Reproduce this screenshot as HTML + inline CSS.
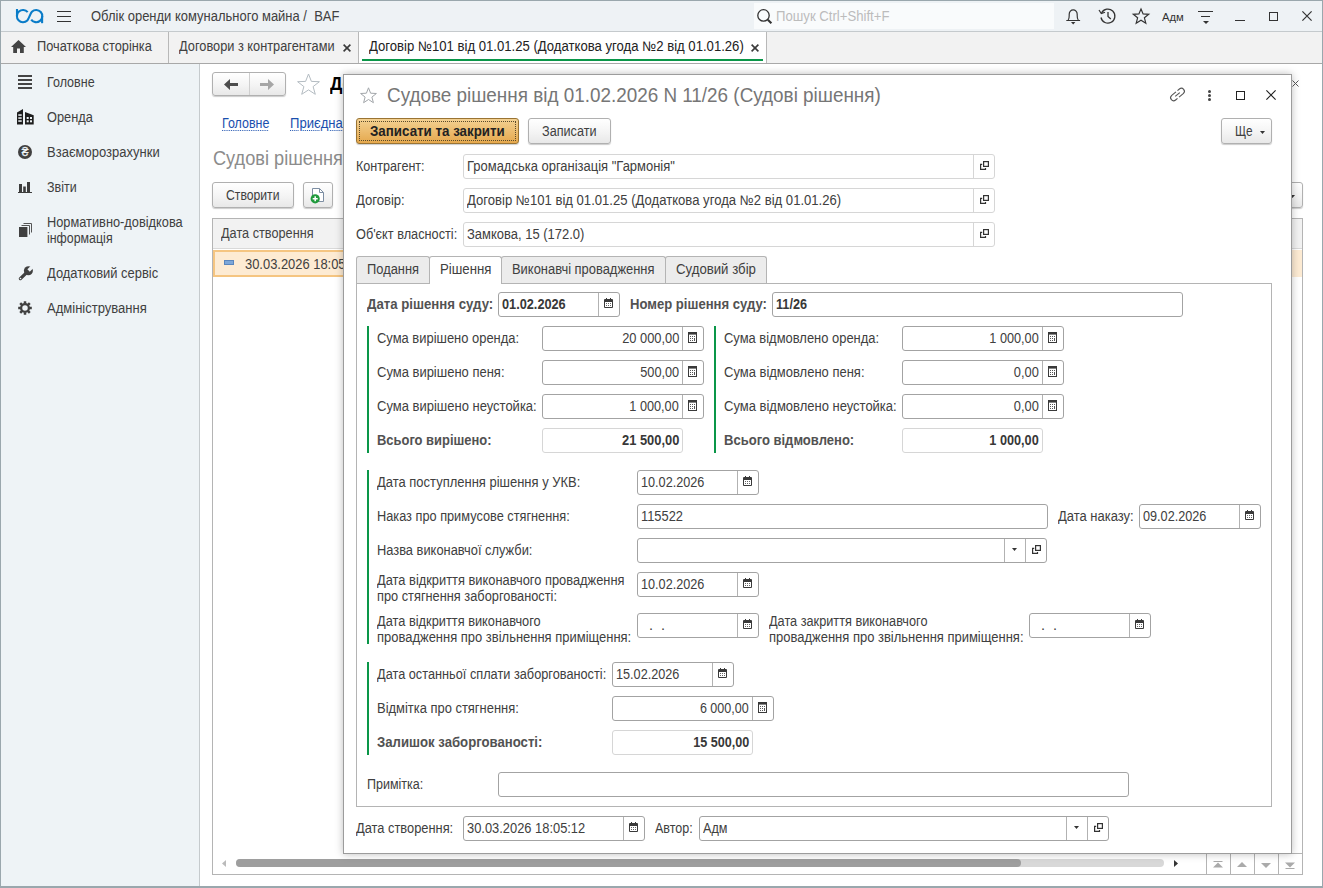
<!DOCTYPE html><html lang="uk"><head><meta charset="utf-8"><title>Судове рішення</title><style>
*{box-sizing:border-box;margin:0;padding:0}
html,body{width:1323px;height:888px;overflow:hidden;background:#fff}
body{font-family:"Liberation Sans",sans-serif;font-size:13.8px;color:#404040;position:relative}
.a{position:absolute}
.t{position:absolute;white-space:pre;line-height:16px;height:16px}
.b{font-weight:bold;color:#525252}
.inp{position:absolute;border:1px solid #a3a3a3;border-radius:3px;background:#fff;height:25px}
.inp.ro{border-color:#d6d6d6}
.inp .v{position:absolute;top:4px;line-height:16px;white-space:pre}
.inp .sep{position:absolute;top:0;bottom:0;width:1px;background:#b2b2b2}
.inp.ro .sep{background:#d6d6d6}
.btn{position:absolute;border:1px solid #b0b0b0;border-radius:3px;background:linear-gradient(#fff,#f4f4f4 55%,#e8e8e8);height:26px;box-shadow:0 1px 1px rgba(0,0,0,.2);white-space:pre}
.gbar{position:absolute;width:2px;background:#0a9648}
svg{position:absolute;overflow:visible}
</style></head><body>
<div class="a" style="left:0px;top:0px;width:1323px;height:32px;background:#eef2f5;border-bottom:1px solid #c5cacd"></div>
<svg style="left:16px;top:9px" width="28" height="15" viewBox="0 0 28 15" fill="none" stroke="#0a7cc8" stroke-width="2.1"><path d="M11.67 3.18A6.1 6.1 0 1 0 11.31 11.41C12.72 10 14.48 4.2 15.89 2.79A6.1 6.1 0 1 1 15.2 10.6"/><path d="M1 0V7.1"/><path d="M26.1 7.1V14.2"/></svg>
<div class="a" style="left:57px;top:11px;width:14px;height:1px;background:#333"></div>
<div class="a" style="left:57px;top:16px;width:14px;height:1px;background:#333"></div>
<div class="a" style="left:57px;top:21px;width:14px;height:1px;background:#333"></div>
<div class="t " style="left:91px;top:9px;transform:scaleX(0.9409);transform-origin:0 50%;">Облік оренди комунального майна /  BAF</div>
<div class="a" style="left:754px;top:3px;width:300px;height:26px;background:#f9fbfc"></div>
<svg style="left:757px;top:9px" width="16" height="16" viewBox="0 0 16 16" fill="none" stroke="#333" stroke-width="1.3"><circle cx="6.5" cy="6.4" r="5.7"/><path d="M10.8 10.7L14.4 14.3" stroke-width="2.1"/></svg>
<div class="t " style="left:776px;top:9px;transform:scaleX(0.9534);transform-origin:0 50%;color:#bcbcbc">Пошук Ctrl+Shift+F</div>
<svg style="left:1066px;top:9px" width="15" height="16" viewBox="0 0 15 16" fill="none" stroke="#333" stroke-width="1.2"><path d="M0.3 11.5H14.1M2 11.5C3.6 9.5 3.2 7 3.2 5.2A4 4.4 0 0 1 11.2 5.2C11.2 7 10.8 9.5 12.4 11.5"/><path d="M5 13.1H9.4L7.2 15.5Z" fill="#333" stroke="none"/></svg>
<svg style="left:1098px;top:8px" width="18" height="16" viewBox="0 0 18 16" fill="none" stroke="#333" stroke-width="1.3"><path d="M3.6 5A7 7 0 1 1 3 9.5"/><path d="M1 2L3.3 5.6L7 4.2" stroke-width="1.2"/><path d="M10 4V8.5L12.8 11"/></svg>
<svg style="left:1132px;top:8px" width="18" height="16" viewBox="0 0 18 16" fill="none" stroke="#333" stroke-width="1.2" stroke-linejoin="miter"><path d="M9 1L11.1 5.9L16.7 6.3L12.4 9.8L13.8 15.2L9 12.3L4.2 15.2L5.6 9.8L1.3 6.3L6.9 5.9Z"/></svg>
<div class="t " style="left:1162px;top:9px;font-size:11px;transform:scaleX(1.0221);transform-origin:0 50%;color:#333">Адм</div>
<div class="a" style="left:1198px;top:11px;width:15px;height:1px;background:#333"></div>
<div class="a" style="left:1201px;top:16px;width:9px;height:1px;background:#333"></div>
<svg style="left:1202.5px;top:20.5px" width="6" height="3" viewBox="0 0 6 3"><path d="M0 0H6L3 3Z" fill="#333"/></svg>
<div class="a" style="left:1235px;top:20px;width:10px;height:1px;background:#333"></div>
<div class="a" style="left:1269px;top:12px;width:9px;height:9px;border:1px solid #333"></div>
<svg style="left:1302px;top:11px" width="10" height="10" viewBox="0 0 10 10" stroke="#333" stroke-width="1.2"><path d="M0.4 0.4L9.6 9.6M9.6 0.4L0.4 9.6"/></svg>
<div class="a" style="left:0px;top:32px;width:1323px;height:32px;background:#f2f2f2;border-bottom:1px solid #a8a8a8"></div>
<svg style="left:11px;top:40px" width="15" height="13" viewBox="0 0 15 13"><path d="M7.5 0L15 7H12.8V13H9V8.5H6V13H2.2V7H0Z" fill="#444"/></svg>
<div class="t " style="left:37px;top:39px;transform:scaleX(0.9271);transform-origin:0 50%;">Початкова сторінка</div>
<div class="a" style="left:168px;top:32px;width:1px;height:31px;background:#b8b8b8"></div>
<div class="t " style="left:179px;top:39px;transform:scaleX(0.9262);transform-origin:0 50%;">Договори з контрагентами</div>
<svg style="left:342.5px;top:43.5px" width="8" height="8" viewBox="0 0 8 8" stroke="#3a3a3a" stroke-width="1.6"><path d="M0.6 0.6L7.4 7.4M7.4 0.6L0.6 7.4"/></svg>
<div class="a" style="left:358px;top:32px;width:1px;height:31px;background:#b8b8b8"></div>
<div class="a" style="left:359px;top:32px;width:407px;height:31px;background:#fff"></div>
<div class="t " style="left:369px;top:39px;transform:scaleX(0.9509);transform-origin:0 50%;color:#222">Договір №101 від 01.01.25 (Додаткова угода №2 від 01.01.26)</div>
<svg style="left:750.5px;top:43.5px" width="8" height="8" viewBox="0 0 8 8" stroke="#3a3a3a" stroke-width="1.6"><path d="M0.6 0.6L7.4 7.4M7.4 0.6L0.6 7.4"/></svg>
<div class="a" style="left:362px;top:59px;width:401px;height:2px;background:#0a9648"></div>
<div class="a" style="left:766px;top:32px;width:1px;height:31px;background:#b8b8b8"></div>
<div class="a" style="left:0px;top:64px;width:200px;height:824px;background:#eef3f6;border-right:1px solid #c5cacd"></div>
<div class="t " style="left:47px;top:75px;transform:scaleX(0.9080);transform-origin:0 50%;">Головне</div>
<div class="t " style="left:47px;top:110px;transform:scaleX(0.9267);transform-origin:0 50%;">Оренда</div>
<div class="t " style="left:47px;top:145px;transform:scaleX(0.9436);transform-origin:0 50%;">Взаєморозрахунки</div>
<div class="t " style="left:47px;top:180px;transform:scaleX(0.9034);transform-origin:0 50%;">Звіти</div>
<div class="t " style="left:47px;top:215px;transform:scaleX(0.9276);transform-origin:0 50%;">Нормативно-довідкова</div>
<div class="t " style="left:47px;top:231px;transform:scaleX(0.8988);transform-origin:0 50%;">інформація</div>
<div class="t " style="left:47px;top:266px;transform:scaleX(0.9377);transform-origin:0 50%;">Додатковий сервіс</div>
<div class="t " style="left:47px;top:301px;transform:scaleX(0.9443);transform-origin:0 50%;">Адміністрування</div>
<div class="a" style="left:18px;top:75px;width:14px;height:2px;background:#444"></div>
<div class="a" style="left:18px;top:79px;width:14px;height:2px;background:#444"></div>
<div class="a" style="left:18px;top:83px;width:14px;height:2px;background:#444"></div>
<div class="a" style="left:18px;top:87px;width:14px;height:2px;background:#444"></div>
<svg style="left:17px;top:109px" width="17" height="16" viewBox="0 0 17 16" fill="#1e1e1e"><path d="M0 3.5L6 0V15.5H0Z"/><path d="M8 3L16.7 6.3V15.5H8Z"/><g fill="#eef3f6"><rect x="1.3" y="5.3" width="3.4" height="1.5"/><rect x="1.3" y="8.3" width="3.4" height="1.5"/><rect x="1.3" y="11.3" width="3.4" height="1.5"/><rect x="9.7" y="8" width="2" height="2"/><rect x="13" y="8" width="2" height="2"/><rect x="9.7" y="11.3" width="2" height="2"/><rect x="13" y="11.3" width="2" height="2"/></g></svg>
<svg style="left:18px;top:145px" width="14" height="14" viewBox="0 0 14 14"><circle cx="7" cy="7" r="7" fill="#404040"/><text x="7" y="11.2" font-size="12" text-anchor="middle" fill="#eef3f6" stroke="#eef3f6" stroke-width=".3" font-family="Liberation Sans, sans-serif">₴</text></svg>
<svg style="left:18px;top:182px" width="14" height="11" viewBox="0 0 14 11" fill="#3c3c3c"><rect x="0" y="10" width="14" height="1"/><rect x="1" y="2" width="3" height="8"/><rect x="5.2" y="4.5" width="2.6" height="5.5"/><rect x="9" y="0" width="3" height="10"/></svg>
<svg style="left:19px;top:223px" width="13" height="14" viewBox="0 0 13 14"><path d="M4.5 0.5H12.5V9.5" fill="none" stroke="#555"/><path d="M2.5 2.5H10.5V11.5" fill="none" stroke="#555"/><rect x="0" y="4" width="8.4" height="10" fill="#404040"/></svg>
<svg style="left:17.5px;top:265.5px" width="15" height="15" viewBox="0 0 15 15"><path d="M2.4 12.6L8.6 6.6" stroke="#404040" stroke-width="3.3" stroke-linecap="round"/><circle cx="10.4" cy="4.7" r="4.5" fill="#404040"/><path d="M10.6 4.5L15.5 -0.4" stroke="#eef3f6" stroke-width="3.4"/><circle cx="2.5" cy="12.5" r="0.8" fill="#eef3f6"/></svg>
<svg style="left:18px;top:301px" width="14" height="14" viewBox="0 0 14 14"><circle cx="7" cy="7" r="3.9" fill="none" stroke="#404040" stroke-width="2.3"/><g stroke="#404040" stroke-width="2.5"><path d="M7 0.2V2.6M7 11.4V13.8M0.2 7H2.6M11.4 7H13.8M2.2 2.2L3.9 3.9M10.1 10.1L11.8 11.8M2.2 11.8L3.9 10.1M10.1 3.9L11.8 2.2"/></g></svg>
<div class="btn" style="left:212px;top:72px;width:74px;height:24px"></div>
<div class="a" style="left:249px;top:73px;width:1px;height:22px;background:#cfcfcf"></div>
<svg style="left:224px;top:79px" width="14" height="11" viewBox="0 0 14 11"><path d="M0 5.5L6 0V4H14V7H6V11Z" fill="#4d4d4d"/></svg>
<svg style="left:260px;top:79px" width="14" height="11" viewBox="0 0 14 11"><path d="M14 5.5L8 0V4H0V7H8V11Z" fill="#a6a6a6"/></svg>
<svg style="left:297px;top:73px" width="23" height="22" viewBox="0 0 23 22" fill="none" stroke="#b4bcc2" stroke-width="1"><path d="M11.5 1L14.4 8.4L22.4 8.7L16.1 13.6L18.3 21.3L11.5 16.9L4.7 21.3L6.9 13.6L0.6 8.7L8.6 8.4Z"/></svg>
<div class="t b" style="left:330px;top:72px;font-size:18.7px;transform:scaleX(.93);transform-origin:0 50%;line-height:24px;height:24px;color:#000">Договір №101 від 01.01.25 (Додаткова угода №2 від 01.01.26)</div>
<div class="t " style="left:222px;top:116px;transform:scaleX(0.9042);transform-origin:0 50%;color:#1a4fae;text-decoration:underline dotted #1a4fae 1px;text-underline-offset:2px">Головне</div>
<div class="t " style="left:290px;top:116px;transform:scaleX(0.9495);transform-origin:0 50%;color:#1a4fae;text-decoration:underline dotted #1a4fae 1px;text-underline-offset:2px">Приєднані файли</div>
<div class="t" style="left:212.5px;top:146px;font-size:19.6px;line-height:24px;height:24px;color:#8c8c8c;transform:scaleX(0.9275);transform-origin:0 50%;">Судові рішення</div>
<div class="btn" style="left:212px;top:182px;width:82px"></div>
<div class="t " style="left:226px;top:188px;transform:scaleX(0.8836);transform-origin:0 50%;">Створити</div>
<div class="btn" style="left:303px;top:182px;width:30px"></div>
<svg style="left:310px;top:187px" width="15" height="17" viewBox="0 0 15 17"><path d="M2.5 1.5H9.5L13.5 5.5V14.5H2.5Z" fill="#fff" stroke="#7d8ea3"/><path d="M9.5 1.5V5.5H13.5" fill="none" stroke="#7d8ea3"/><circle cx="5.2" cy="11.8" r="4.6" fill="#1f9a3c"/><path d="M2.7 11.8H7.7M5.2 9.3V14.3" stroke="#fff" stroke-width="1.5"/></svg>
<div class="btn" style="left:1270px;top:182px;width:33px"></div>
<svg style="left:1290px;top:195px" width="5" height="3" viewBox="0 0 5 3"><path d="M0 0H5L2.5 3Z" fill="#333"/></svg>
<div class="a" style="left:212px;top:218px;width:1091px;height:657px;border:1px solid #b4b4b4;background:#fff"></div>
<div class="a" style="left:213px;top:219px;width:1089px;height:30px;background:#f2f2f2;border-bottom:1px solid #d9d9d9"></div>
<div class="t " style="left:221px;top:226px;transform:scaleX(0.9212);transform-origin:0 50%;color:#444">Дата створення</div>
<div class="a" style="left:213px;top:250px;width:1089px;height:27px;background:#fdebd3"></div>
<div class="a" style="left:213px;top:250px;width:500px;height:27px;border:2px solid #f5c581;border-right:none"></div>
<div class="a" style="left:224px;top:260px;width:10px;height:5px;background:#7da7d9;border:1px solid #5a86bd"></div>
<div class="t " style="left:245px;top:257px;transform:scaleX(0.9361);transform-origin:0 50%;">30.03.2026 18:05:12</div>
<div class="a" style="left:1206px;top:853px;width:96px;height:1px;background:#b4b4b4"></div>
<svg style="left:222px;top:860px" width="4" height="7" viewBox="0 0 4 7"><path d="M4 0V7L0 3.5Z" fill="#bbb"/></svg>
<div class="a" style="left:236px;top:859px;width:928px;height:8px;background:#d8d8d8;border-radius:4px"></div>
<div class="a" style="left:236px;top:859px;width:785px;height:8px;background:#9e9e9e;border-radius:4px"></div>
<svg style="left:1174px;top:860px" width="4" height="7" viewBox="0 0 4 7"><path d="M0 0V7L4 3.5Z" fill="#333"/></svg>
<div class="a" style="left:1206px;top:854px;width:1px;height:20px;background:#b4b4b4"></div>
<div class="a" style="left:1230px;top:854px;width:1px;height:20px;background:#b4b4b4"></div>
<div class="a" style="left:1254px;top:854px;width:1px;height:20px;background:#b4b4b4"></div>
<div class="a" style="left:1278px;top:854px;width:1px;height:20px;background:#b4b4b4"></div>
<svg style="left:1213px;top:861px" width="10" height="7" viewBox="0 0 10 7" fill="#aaa"><rect x="0.5" y="0" width="9" height="1"/><path d="M0 6.5H10L5 1.5Z"/></svg>
<svg style="left:1237px;top:862px" width="10" height="5" viewBox="0 0 10 5" fill="#aaa"><path d="M0 5H10L5 0Z"/></svg>
<svg style="left:1261px;top:863px" width="10" height="5" viewBox="0 0 10 5" fill="#aaa"><path d="M0 0H10L5 5Z"/></svg>
<svg style="left:1285px;top:862px" width="10" height="7" viewBox="0 0 10 7" fill="#aaa"><rect x="0.5" y="6" width="9" height="1"/><path d="M0 0.5H10L5 5.5Z"/></svg>
<svg style="left:1292px;top:80px" width="7" height="7" viewBox="0 0 7 7" stroke="#555" stroke-width="1"><path d="M0.5 0.5L6.5 6.5M6.5 0.5L0.5 6.5"/></svg>
<div class="a" style="left:0px;top:0px;width:1px;height:888px;background:#9aa7ad"></div>
<div class="a" style="left:1322px;top:0px;width:1px;height:888px;background:#9aa7ad"></div>
<div class="a" style="left:0px;top:0px;width:1323px;height:1px;background:#9aa7ad"></div>
<div class="a" style="left:0px;top:886px;width:1323px;height:2px;background:#9aa7ad"></div>
<div class="a" style="left:343px;top:74px;width:949px;height:780px;background:#fff;border:1px solid #9c9c9c;box-shadow:0 0 8px rgba(0,0,0,.26)"></div>
<svg style="left:359.5px;top:87px" width="17" height="16" viewBox="0 0 17 16" fill="none" stroke="#a2a6aa" stroke-width="1"><path d="M8.5 0.8L10.6 6.2L16.4 6.5L11.9 10.1L13.4 15.7L8.5 12.5L3.6 15.7L5.1 10.1L0.6 6.5L6.4 6.2Z"/></svg>
<div class="t" style="left:387px;top:83px;font-size:19.6px;line-height:24px;height:24px;color:#767676;transform:scaleX(0.9635);transform-origin:0 50%;">Судове рішення від 01.02.2026 N 11/26 (Судові рішення)</div>
<svg style="left:1169px;top:86px" width="17" height="17" viewBox="0 0 17 17" fill="none" stroke="#555" stroke-width="1.1"><g transform="rotate(-40 8.5 8.5)"><path d="M9 5.5H3.5A3 3 0 0 0 3.5 11.5H6"/><path d="M8 11.5H13.5A3 3 0 0 0 13.5 5.5H11"/><path d="M5.5 8.5H11.5"/></g></svg>
<div class="a" style="left:1208px;top:90px;width:3px;height:3px;background:#444;border-radius:1.5px"></div>
<div class="a" style="left:1208px;top:94px;width:3px;height:3px;background:#444;border-radius:1.5px"></div>
<div class="a" style="left:1208px;top:98px;width:3px;height:3px;background:#444;border-radius:1.5px"></div>
<div class="a" style="left:1236px;top:91px;width:9px;height:9px;border:1px solid #222"></div>
<svg style="left:1266px;top:90px" width="10" height="10" viewBox="0 0 10 10" stroke="#222" stroke-width="1.2"><path d="M0.4 0.4L9.6 9.6M9.6 0.4L0.4 9.6"/></svg>
<div class="btn" style="left:356px;top:118px;width:163px;background:linear-gradient(#f3d192,#e5a84d);border-color:#9a7433"><div style="position:absolute;left:2px;top:2px;right:2px;bottom:2px;border:1px dotted #5a4a2a"></div></div>
<div class="t b" style="left:370px;top:124px;transform:scaleX(0.9671);transform-origin:0 50%;color:#222">Записати та закрити</div>
<div class="btn" style="left:528px;top:118px;width:83px"></div>
<div class="t " style="left:542px;top:124px;transform:scaleX(0.9162);transform-origin:0 50%;">Записати</div>
<div class="btn" style="left:1221px;top:118px;width:51px"></div>
<div class="t " style="left:1235px;top:124px;transform:scaleX(0.8588);transform-origin:0 50%;">Ще</div>
<svg style="left:1259.5px;top:131px" width="5" height="3" viewBox="0 0 5 3"><path d="M0 0H5L2.5 3Z" fill="#333"/></svg>
<div class="t " style="left:356px;top:159px;transform:scaleX(0.9126);transform-origin:0 50%;">Контрагент:</div>
<div class="inp ro" style="left:463px;top:154px;width:532px;height:25px">
<div class="v" style="left:3px;transform:scaleX(0.9405);transform-origin:0 50%;">Громадська організація &quot;Гармонія&quot;</div>
<div class="sep" style="right:20px"></div>
</div>
<svg style="left:980px;top:161px" width="9" height="9" viewBox="0 0 9 9" fill="none" stroke="#333" stroke-width="1.2"><rect x="3.6" y="0.6" width="4.8" height="4.8"/><path d="M2.2 3.4H0.6V8.4H5.5V7"/></svg>
<div class="t " style="left:356px;top:193px;transform:scaleX(0.9459);transform-origin:0 50%;">Договір:</div>
<div class="inp ro" style="left:463px;top:188px;width:532px;height:25px">
<div class="v" style="left:3px;transform:scaleX(0.9494);transform-origin:0 50%;">Договір №101 від 01.01.25 (Додаткова угода №2 від 01.01.26)</div>
<div class="sep" style="right:20px"></div>
</div>
<svg style="left:980px;top:195px" width="9" height="9" viewBox="0 0 9 9" fill="none" stroke="#333" stroke-width="1.2"><rect x="3.6" y="0.6" width="4.8" height="4.8"/><path d="M2.2 3.4H0.6V8.4H5.5V7"/></svg>
<div class="t " style="left:356px;top:227px;transform:scaleX(0.9225);transform-origin:0 50%;">Об&#x27;єкт власності:</div>
<div class="inp ro" style="left:463px;top:222px;width:532px;height:25px">
<div class="v" style="left:3px;transform:scaleX(0.9402);transform-origin:0 50%;">Замкова, 15 (172.0)</div>
<div class="sep" style="right:20px"></div>
</div>
<svg style="left:980px;top:229px" width="9" height="9" viewBox="0 0 9 9" fill="none" stroke="#333" stroke-width="1.2"><rect x="3.6" y="0.6" width="4.8" height="4.8"/><path d="M2.2 3.4H0.6V8.4H5.5V7"/></svg>
<div class="a" style="left:356px;top:283px;width:916px;height:524px;border:1px solid #b4b4b4;background:#fff"></div>
<div class="a" style="left:356px;top:256px;width:74px;height:27px;border:1px solid #b4b4b4;border-bottom:none;border-radius:3px 3px 0 0;background:#ececec"></div>
<div class="t " style="left:367px;top:262px;transform:scaleX(0.9330);transform-origin:0 50%;">Подання</div>
<div class="a" style="left:501px;top:256px;width:165px;height:27px;border:1px solid #b4b4b4;border-bottom:none;border-radius:3px 3px 0 0;background:#ececec"></div>
<div class="t " style="left:512px;top:262px;transform:scaleX(0.9362);transform-origin:0 50%;">Виконавчі провадження</div>
<div class="a" style="left:665px;top:256px;width:102px;height:27px;border:1px solid #b4b4b4;border-bottom:none;border-radius:3px 3px 0 0;background:#ececec"></div>
<div class="t " style="left:676px;top:262px;transform:scaleX(0.9567);transform-origin:0 50%;">Судовий збір</div>
<div class="a" style="left:429px;top:256px;width:73px;height:28px;border:1px solid #b4b4b4;border-bottom:none;border-radius:3px 3px 0 0;background:#fff"></div>
<div class="t " style="left:440px;top:262px;transform:scaleX(0.9584);transform-origin:0 50%;">Рішення</div>
<div class="t b" style="left:367px;top:297px;transform:scaleX(0.9578);transform-origin:0 50%;">Дата рішення суду:</div>
<div class="inp" style="left:498px;top:292px;width:122px;height:25px">
<div class="v" style="left:3px;font-weight:bold;color:#383838;transform:scaleX(0.9224);transform-origin:0 50%;">01.02.2026</div>
<div class="sep" style="right:20px"></div>
</div>
<svg style="left:604px;top:298px" width="9" height="10" viewBox="0 0 9 10"><rect x="0" y="1" width="9" height="9" rx="1" fill="#3a3a3a"/><rect x="1" y="4" width="7" height="5" fill="#fff"/><rect x="2" y="0" width="1" height="2" fill="#3a3a3a"/><rect x="6" y="0" width="1" height="2" fill="#3a3a3a"/><g fill="#666"><rect x="2" y="5" width="1" height="1"/><rect x="4" y="5" width="1" height="1"/><rect x="6" y="5" width="1" height="1"/><rect x="2" y="7" width="1" height="1"/><rect x="4" y="7" width="1" height="1"/><rect x="6" y="7" width="1" height="1"/></g></svg>
<div class="t b" style="left:630px;top:297px;transform:scaleX(0.9483);transform-origin:0 50%;">Номер рішення суду:</div>
<div class="inp" style="left:772px;top:292px;width:411px;height:25px">
<div class="v" style="left:3px;font-weight:bold;color:#383838;transform:scaleX(0.9181);transform-origin:0 50%;">11/26</div>
</div>
<div class="gbar" style="left:367px;top:326px;height:127px"></div>
<div class="t " style="left:377px;top:331px;transform:scaleX(0.9377);transform-origin:0 50%;">Сума вирішено оренда:</div>
<div class="inp" style="left:542px;top:326px;width:162px;height:25px">
<div class="v" style="right:24px;transform:scaleX(0.9317);transform-origin:100% 50%;">20 000,00</div>
<div class="sep" style="right:20px"></div>
</div>
<svg style="left:688px;top:332px" width="9" height="11" viewBox="0 0 9 11"><rect x="0.5" y="0.5" width="8" height="10" fill="#fff" stroke="#3a3a3a"/><rect x="1" y="1" width="7" height="1.6" fill="#3a3a3a"/><g fill="#555"><rect x="2" y="4" width="1" height="1"/><rect x="4" y="4" width="1" height="1"/><rect x="6" y="4" width="1" height="1"/><rect x="2" y="6" width="1" height="1"/><rect x="4" y="6" width="1" height="1"/><rect x="6" y="6" width="1" height="3"/><rect x="2" y="8" width="1" height="1"/><rect x="4" y="8" width="1" height="1"/></g></svg>
<div class="t " style="left:377px;top:365px;transform:scaleX(0.9415);transform-origin:0 50%;">Сума вирішено пеня:</div>
<div class="inp" style="left:542px;top:360px;width:162px;height:25px">
<div class="v" style="right:24px;transform:scaleX(0.9241);transform-origin:100% 50%;">500,00</div>
<div class="sep" style="right:20px"></div>
</div>
<svg style="left:688px;top:366px" width="9" height="11" viewBox="0 0 9 11"><rect x="0.5" y="0.5" width="8" height="10" fill="#fff" stroke="#3a3a3a"/><rect x="1" y="1" width="7" height="1.6" fill="#3a3a3a"/><g fill="#555"><rect x="2" y="4" width="1" height="1"/><rect x="4" y="4" width="1" height="1"/><rect x="6" y="4" width="1" height="1"/><rect x="2" y="6" width="1" height="1"/><rect x="4" y="6" width="1" height="1"/><rect x="6" y="6" width="1" height="3"/><rect x="2" y="8" width="1" height="1"/><rect x="4" y="8" width="1" height="1"/></g></svg>
<div class="t " style="left:377px;top:399px;transform:scaleX(0.9421);transform-origin:0 50%;">Сума вирішено неустойка:</div>
<div class="inp" style="left:542px;top:394px;width:162px;height:25px">
<div class="v" style="right:24px;transform:scaleX(0.9196);transform-origin:100% 50%;">1 000,00</div>
<div class="sep" style="right:20px"></div>
</div>
<svg style="left:688px;top:400px" width="9" height="11" viewBox="0 0 9 11"><rect x="0.5" y="0.5" width="8" height="10" fill="#fff" stroke="#3a3a3a"/><rect x="1" y="1" width="7" height="1.6" fill="#3a3a3a"/><g fill="#555"><rect x="2" y="4" width="1" height="1"/><rect x="4" y="4" width="1" height="1"/><rect x="6" y="4" width="1" height="1"/><rect x="2" y="6" width="1" height="1"/><rect x="4" y="6" width="1" height="1"/><rect x="6" y="6" width="1" height="3"/><rect x="2" y="8" width="1" height="1"/><rect x="4" y="8" width="1" height="1"/></g></svg>
<div class="t b" style="left:377px;top:433px;transform:scaleX(0.9376);transform-origin:0 50%;">Всього вирішено:</div>
<div class="inp ro" style="left:542px;top:428px;width:141px;height:25px">
<div class="v" style="right:3px;font-weight:bold;color:#383838;transform:scaleX(0.9350);transform-origin:100% 50%;">21 500,00</div>
</div>
<div class="gbar" style="left:714px;top:326px;height:127px"></div>
<div class="t " style="left:724px;top:331px;transform:scaleX(0.9379);transform-origin:0 50%;">Сума відмовлено оренда:</div>
<div class="inp" style="left:902px;top:326px;width:162px;height:25px">
<div class="v" style="right:24px;transform:scaleX(0.9196);transform-origin:100% 50%;">1 000,00</div>
<div class="sep" style="right:20px"></div>
</div>
<svg style="left:1048px;top:332px" width="9" height="11" viewBox="0 0 9 11"><rect x="0.5" y="0.5" width="8" height="10" fill="#fff" stroke="#3a3a3a"/><rect x="1" y="1" width="7" height="1.6" fill="#3a3a3a"/><g fill="#555"><rect x="2" y="4" width="1" height="1"/><rect x="4" y="4" width="1" height="1"/><rect x="6" y="4" width="1" height="1"/><rect x="2" y="6" width="1" height="1"/><rect x="4" y="6" width="1" height="1"/><rect x="6" y="6" width="1" height="3"/><rect x="2" y="8" width="1" height="1"/><rect x="4" y="8" width="1" height="1"/></g></svg>
<div class="t " style="left:724px;top:365px;transform:scaleX(0.9415);transform-origin:0 50%;">Сума відмовлено пеня:</div>
<div class="inp" style="left:902px;top:360px;width:162px;height:25px">
<div class="v" style="right:24px;transform:scaleX(0.9308);transform-origin:100% 50%;">0,00</div>
<div class="sep" style="right:20px"></div>
</div>
<svg style="left:1048px;top:366px" width="9" height="11" viewBox="0 0 9 11"><rect x="0.5" y="0.5" width="8" height="10" fill="#fff" stroke="#3a3a3a"/><rect x="1" y="1" width="7" height="1.6" fill="#3a3a3a"/><g fill="#555"><rect x="2" y="4" width="1" height="1"/><rect x="4" y="4" width="1" height="1"/><rect x="6" y="4" width="1" height="1"/><rect x="2" y="6" width="1" height="1"/><rect x="4" y="6" width="1" height="1"/><rect x="6" y="6" width="1" height="3"/><rect x="2" y="8" width="1" height="1"/><rect x="4" y="8" width="1" height="1"/></g></svg>
<div class="t " style="left:724px;top:399px;transform:scaleX(0.9419);transform-origin:0 50%;">Сума відмовлено неустойка:</div>
<div class="inp" style="left:902px;top:394px;width:162px;height:25px">
<div class="v" style="right:24px;transform:scaleX(0.9308);transform-origin:100% 50%;">0,00</div>
<div class="sep" style="right:20px"></div>
</div>
<svg style="left:1048px;top:400px" width="9" height="11" viewBox="0 0 9 11"><rect x="0.5" y="0.5" width="8" height="10" fill="#fff" stroke="#3a3a3a"/><rect x="1" y="1" width="7" height="1.6" fill="#3a3a3a"/><g fill="#555"><rect x="2" y="4" width="1" height="1"/><rect x="4" y="4" width="1" height="1"/><rect x="6" y="4" width="1" height="1"/><rect x="2" y="6" width="1" height="1"/><rect x="4" y="6" width="1" height="1"/><rect x="6" y="6" width="1" height="3"/><rect x="2" y="8" width="1" height="1"/><rect x="4" y="8" width="1" height="1"/></g></svg>
<div class="t b" style="left:724px;top:433px;transform:scaleX(0.9448);transform-origin:0 50%;">Всього відмовлено:</div>
<div class="inp ro" style="left:902px;top:428px;width:141px;height:25px">
<div class="v" style="right:3px;font-weight:bold;color:#383838;transform:scaleX(0.9196);transform-origin:100% 50%;">1 000,00</div>
</div>
<div class="gbar" style="left:367px;top:470px;height:174px"></div>
<div class="t " style="left:377px;top:475px;transform:scaleX(0.9406);transform-origin:0 50%;">Дата поступлення рішення у УКВ:</div>
<div class="inp" style="left:637px;top:470px;width:122px;height:25px">
<div class="v" style="left:3px;transform:scaleX(0.9180);transform-origin:0 50%;">10.02.2026</div>
<div class="sep" style="right:20px"></div>
</div>
<svg style="left:743px;top:476px" width="9" height="10" viewBox="0 0 9 10"><rect x="0" y="1" width="9" height="9" rx="1" fill="#3a3a3a"/><rect x="1" y="4" width="7" height="5" fill="#fff"/><rect x="2" y="0" width="1" height="2" fill="#3a3a3a"/><rect x="6" y="0" width="1" height="2" fill="#3a3a3a"/><g fill="#666"><rect x="2" y="5" width="1" height="1"/><rect x="4" y="5" width="1" height="1"/><rect x="6" y="5" width="1" height="1"/><rect x="2" y="7" width="1" height="1"/><rect x="4" y="7" width="1" height="1"/><rect x="6" y="7" width="1" height="1"/></g></svg>
<div class="t " style="left:377px;top:509px;transform:scaleX(0.9242);transform-origin:0 50%;">Наказ про примусове стягнення:</div>
<div class="inp" style="left:637px;top:504px;width:411px;height:25px">
<div class="v" style="left:3px;transform:scaleX(0.9330);transform-origin:0 50%;">115522</div>
</div>
<div class="t " style="left:1058px;top:509px;transform:scaleX(0.9411);transform-origin:0 50%;">Дата наказу:</div>
<div class="inp" style="left:1139px;top:504px;width:122px;height:25px">
<div class="v" style="left:3px;transform:scaleX(0.9180);transform-origin:0 50%;">09.02.2026</div>
<div class="sep" style="right:20px"></div>
</div>
<svg style="left:1245px;top:510px" width="9" height="10" viewBox="0 0 9 10"><rect x="0" y="1" width="9" height="9" rx="1" fill="#3a3a3a"/><rect x="1" y="4" width="7" height="5" fill="#fff"/><rect x="2" y="0" width="1" height="2" fill="#3a3a3a"/><rect x="6" y="0" width="1" height="2" fill="#3a3a3a"/><g fill="#666"><rect x="2" y="5" width="1" height="1"/><rect x="4" y="5" width="1" height="1"/><rect x="6" y="5" width="1" height="1"/><rect x="2" y="7" width="1" height="1"/><rect x="4" y="7" width="1" height="1"/><rect x="6" y="7" width="1" height="1"/></g></svg>
<div class="t " style="left:377px;top:543px;transform:scaleX(0.9319);transform-origin:0 50%;">Назва виконавчої служби:</div>
<div class="inp" style="left:637px;top:538px;width:410px;height:25px">
<div class="v" style="left:3px;"></div>
<div class="sep" style="right:41px"></div>
<div class="sep" style="right:20px"></div>
</div>
<svg style="left:1012px;top:548px" width="5" height="3" viewBox="0 0 5 3"><path d="M0 0H5L2.5 3Z" fill="#333"/></svg>
<svg style="left:1032px;top:545px" width="9" height="9" viewBox="0 0 9 9" fill="none" stroke="#333" stroke-width="1.2"><rect x="3.6" y="0.6" width="4.8" height="4.8"/><path d="M2.2 3.4H0.6V8.4H5.5V7"/></svg>
<div class="t " style="left:377px;top:573px;transform:scaleX(0.9321);transform-origin:0 50%;">Дата відкриття виконавчого провадження</div>
<div class="t " style="left:377px;top:589px;transform:scaleX(0.9272);transform-origin:0 50%;">про стягнення заборгованості:</div>
<div class="inp" style="left:637px;top:572px;width:122px;height:25px">
<div class="v" style="left:3px;transform:scaleX(0.9180);transform-origin:0 50%;">10.02.2026</div>
<div class="sep" style="right:20px"></div>
</div>
<svg style="left:743px;top:578px" width="9" height="10" viewBox="0 0 9 10"><rect x="0" y="1" width="9" height="9" rx="1" fill="#3a3a3a"/><rect x="1" y="4" width="7" height="5" fill="#fff"/><rect x="2" y="0" width="1" height="2" fill="#3a3a3a"/><rect x="6" y="0" width="1" height="2" fill="#3a3a3a"/><g fill="#666"><rect x="2" y="5" width="1" height="1"/><rect x="4" y="5" width="1" height="1"/><rect x="6" y="5" width="1" height="1"/><rect x="2" y="7" width="1" height="1"/><rect x="4" y="7" width="1" height="1"/><rect x="6" y="7" width="1" height="1"/></g></svg>
<div class="t " style="left:377px;top:614px;transform:scaleX(0.9282);transform-origin:0 50%;">Дата відкриття виконавчого</div>
<div class="t " style="left:377px;top:630px;transform:scaleX(0.9400);transform-origin:0 50%;">провадження про звільнення приміщення:</div>
<div class="inp" style="left:637px;top:613px;width:122px;height:25px">
<div class="v" style="left:3px;transform:scaleX(1.0435);transform-origin:0 50%;">  .  .</div>
<div class="sep" style="right:20px"></div>
</div>
<svg style="left:743px;top:619px" width="9" height="10" viewBox="0 0 9 10"><rect x="0" y="1" width="9" height="9" rx="1" fill="#3a3a3a"/><rect x="1" y="4" width="7" height="5" fill="#fff"/><rect x="2" y="0" width="1" height="2" fill="#3a3a3a"/><rect x="6" y="0" width="1" height="2" fill="#3a3a3a"/><g fill="#666"><rect x="2" y="5" width="1" height="1"/><rect x="4" y="5" width="1" height="1"/><rect x="6" y="5" width="1" height="1"/><rect x="2" y="7" width="1" height="1"/><rect x="4" y="7" width="1" height="1"/><rect x="6" y="7" width="1" height="1"/></g></svg>
<div class="t " style="left:769px;top:614px;transform:scaleX(0.9219);transform-origin:0 50%;">Дата закриття виконавчого</div>
<div class="t " style="left:769px;top:630px;transform:scaleX(0.9411);transform-origin:0 50%;">провадження про звільнення приміщення:</div>
<div class="inp" style="left:1029px;top:613px;width:122px;height:25px">
<div class="v" style="left:3px;transform:scaleX(1.0435);transform-origin:0 50%;">  .  .</div>
<div class="sep" style="right:20px"></div>
</div>
<svg style="left:1135px;top:619px" width="9" height="10" viewBox="0 0 9 10"><rect x="0" y="1" width="9" height="9" rx="1" fill="#3a3a3a"/><rect x="1" y="4" width="7" height="5" fill="#fff"/><rect x="2" y="0" width="1" height="2" fill="#3a3a3a"/><rect x="6" y="0" width="1" height="2" fill="#3a3a3a"/><g fill="#666"><rect x="2" y="5" width="1" height="1"/><rect x="4" y="5" width="1" height="1"/><rect x="6" y="5" width="1" height="1"/><rect x="2" y="7" width="1" height="1"/><rect x="4" y="7" width="1" height="1"/><rect x="6" y="7" width="1" height="1"/></g></svg>
<div class="gbar" style="left:367px;top:662px;height:93px"></div>
<div class="t " style="left:377px;top:667px;transform:scaleX(0.9237);transform-origin:0 50%;">Дата останньої сплати заборгованості:</div>
<div class="inp" style="left:612px;top:662px;width:122px;height:25px">
<div class="v" style="left:3px;transform:scaleX(0.9180);transform-origin:0 50%;">15.02.2026</div>
<div class="sep" style="right:20px"></div>
</div>
<svg style="left:718px;top:668px" width="9" height="10" viewBox="0 0 9 10"><rect x="0" y="1" width="9" height="9" rx="1" fill="#3a3a3a"/><rect x="1" y="4" width="7" height="5" fill="#fff"/><rect x="2" y="0" width="1" height="2" fill="#3a3a3a"/><rect x="6" y="0" width="1" height="2" fill="#3a3a3a"/><g fill="#666"><rect x="2" y="5" width="1" height="1"/><rect x="4" y="5" width="1" height="1"/><rect x="6" y="5" width="1" height="1"/><rect x="2" y="7" width="1" height="1"/><rect x="4" y="7" width="1" height="1"/><rect x="6" y="7" width="1" height="1"/></g></svg>
<div class="t " style="left:377px;top:701px;transform:scaleX(0.9375);transform-origin:0 50%;">Відмітка про стягнення:</div>
<div class="inp" style="left:612px;top:696px;width:162px;height:25px">
<div class="v" style="right:24px;transform:scaleX(0.9084);transform-origin:100% 50%;">6 000,00</div>
<div class="sep" style="right:20px"></div>
</div>
<svg style="left:758px;top:702px" width="9" height="11" viewBox="0 0 9 11"><rect x="0.5" y="0.5" width="8" height="10" fill="#fff" stroke="#3a3a3a"/><rect x="1" y="1" width="7" height="1.6" fill="#3a3a3a"/><g fill="#555"><rect x="2" y="4" width="1" height="1"/><rect x="4" y="4" width="1" height="1"/><rect x="6" y="4" width="1" height="1"/><rect x="2" y="6" width="1" height="1"/><rect x="4" y="6" width="1" height="1"/><rect x="6" y="6" width="1" height="3"/><rect x="2" y="8" width="1" height="1"/><rect x="4" y="8" width="1" height="1"/></g></svg>
<div class="t b" style="left:377px;top:735px;transform:scaleX(0.9541);transform-origin:0 50%;">Залишок заборгованості:</div>
<div class="inp ro" style="left:612px;top:730px;width:141px;height:25px">
<div class="v" style="right:3px;font-weight:bold;color:#383838;transform:scaleX(0.9138);transform-origin:100% 50%;">15 500,00</div>
</div>
<div class="t " style="left:367px;top:777px;transform:scaleX(0.9078);transform-origin:0 50%;">Примітка:</div>
<div class="inp" style="left:498px;top:772px;width:631px;height:25px">
<div class="v" style="left:3px;"></div>
</div>
<div class="t " style="left:356px;top:821px;transform:scaleX(0.9315);transform-origin:0 50%;">Дата створення:</div>
<div class="inp" style="left:463px;top:816px;width:182px;height:25px">
<div class="v" style="left:3px;transform:scaleX(0.9337);transform-origin:0 50%;">30.03.2026 18:05:12</div>
<div class="sep" style="right:20px"></div>
</div>
<svg style="left:629px;top:822px" width="9" height="10" viewBox="0 0 9 10"><rect x="0" y="1" width="9" height="9" rx="1" fill="#3a3a3a"/><rect x="1" y="4" width="7" height="5" fill="#fff"/><rect x="2" y="0" width="1" height="2" fill="#3a3a3a"/><rect x="6" y="0" width="1" height="2" fill="#3a3a3a"/><g fill="#666"><rect x="2" y="5" width="1" height="1"/><rect x="4" y="5" width="1" height="1"/><rect x="6" y="5" width="1" height="1"/><rect x="2" y="7" width="1" height="1"/><rect x="4" y="7" width="1" height="1"/><rect x="6" y="7" width="1" height="1"/></g></svg>
<div class="t " style="left:655px;top:821px;transform:scaleX(0.9067);transform-origin:0 50%;">Автор:</div>
<div class="inp" style="left:699px;top:816px;width:410px;height:25px">
<div class="v" style="left:3px;transform:scaleX(0.9121);transform-origin:0 50%;">Адм</div>
<div class="sep" style="right:41px"></div>
<div class="sep" style="right:20px"></div>
</div>
<svg style="left:1074px;top:826px" width="5" height="3" viewBox="0 0 5 3"><path d="M0 0H5L2.5 3Z" fill="#333"/></svg>
<svg style="left:1094px;top:823px" width="9" height="9" viewBox="0 0 9 9" fill="none" stroke="#333" stroke-width="1.2"><rect x="3.6" y="0.6" width="4.8" height="4.8"/><path d="M2.2 3.4H0.6V8.4H5.5V7"/></svg>
</body></html>
